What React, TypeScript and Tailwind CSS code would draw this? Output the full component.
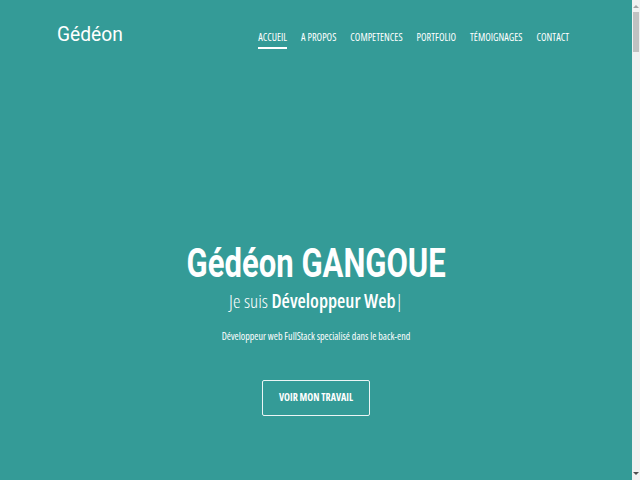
import React from 'react';

const NAV = ['ACCUEIL', 'A PROPOS', 'COMPETENCES', 'PORTFOLIO', 'TÉMOIGNAGES', 'CONTACT'];

function Scrollbar() {
  return (
    <div className="w-[8px] h-full bg-[#f1f1f1] flex flex-col items-center">
      <span className="mt-[5px] w-0 h-0 border-x-[3px] border-x-transparent border-b-[3px] border-b-[#a3a3a3]" />
      <span className="mt-[4px] w-[6px] h-[40px] bg-[#c1c1c1]" />
      <span className="mt-auto mb-[5px] w-0 h-0 border-x-[3px] border-x-transparent border-t-[3px] border-t-[#505050]" />
    </div>
  );
}

export default function App() {
  return (
    <div className="h-[480px] flex bg-[#349b97] text-white overflow-hidden">
      <div className="flex-1 flex flex-col">
        <header className="flex items-center justify-between pl-[57px] pr-[63px] h-[74px]">
          <span className="mb-[5px] origin-left scale-x-[0.915] font-['Roboto',sans-serif] text-[21px] leading-none">Gédéon</span>
          <nav className="mt-[1px] flex items-center gap-[14px] font-['Open_Sans',sans-serif] text-[10.2px] [font-stretch:condensed]">
            {NAV.map((n, i) => (
              <a key={n} className="relative">
                {n}
                {i === 0 && <span className="absolute left-0 right-0 -bottom-[4px] h-[2px] bg-white" />}
              </a>
            ))}
          </nav>
        </header>
        <section className="flex flex-col items-center pt-[169px]">
          <h1 className="font-['Roboto',sans-serif] font-bold text-[41px] leading-none scale-x-[0.757]">Gédéon GANGOUE</h1>
          <p className="mt-[3px] font-['Open_Sans',sans-serif] text-[19px] [font-stretch:condensed]">
            <span className="font-light">Je suis </span>
            <span className="font-semibold">Développeur Web</span>
            <span className="font-light">|</span>
          </p>
          <p className="mt-[13px] font-['Open_Sans',sans-serif] text-[10px] [font-stretch:condensed]">
            Développeur web FullStack specialisé dans le back-end
          </p>
          <button className="mt-[36px] w-[108px] h-[36px] border border-white/90 rounded-[2px] font-['Open_Sans',sans-serif] font-bold text-[10px] [font-stretch:condensed]">
            VOIR MON TRAVAIL
          </button>
        </section>
      </div>
      <Scrollbar />
    </div>
  );
}
